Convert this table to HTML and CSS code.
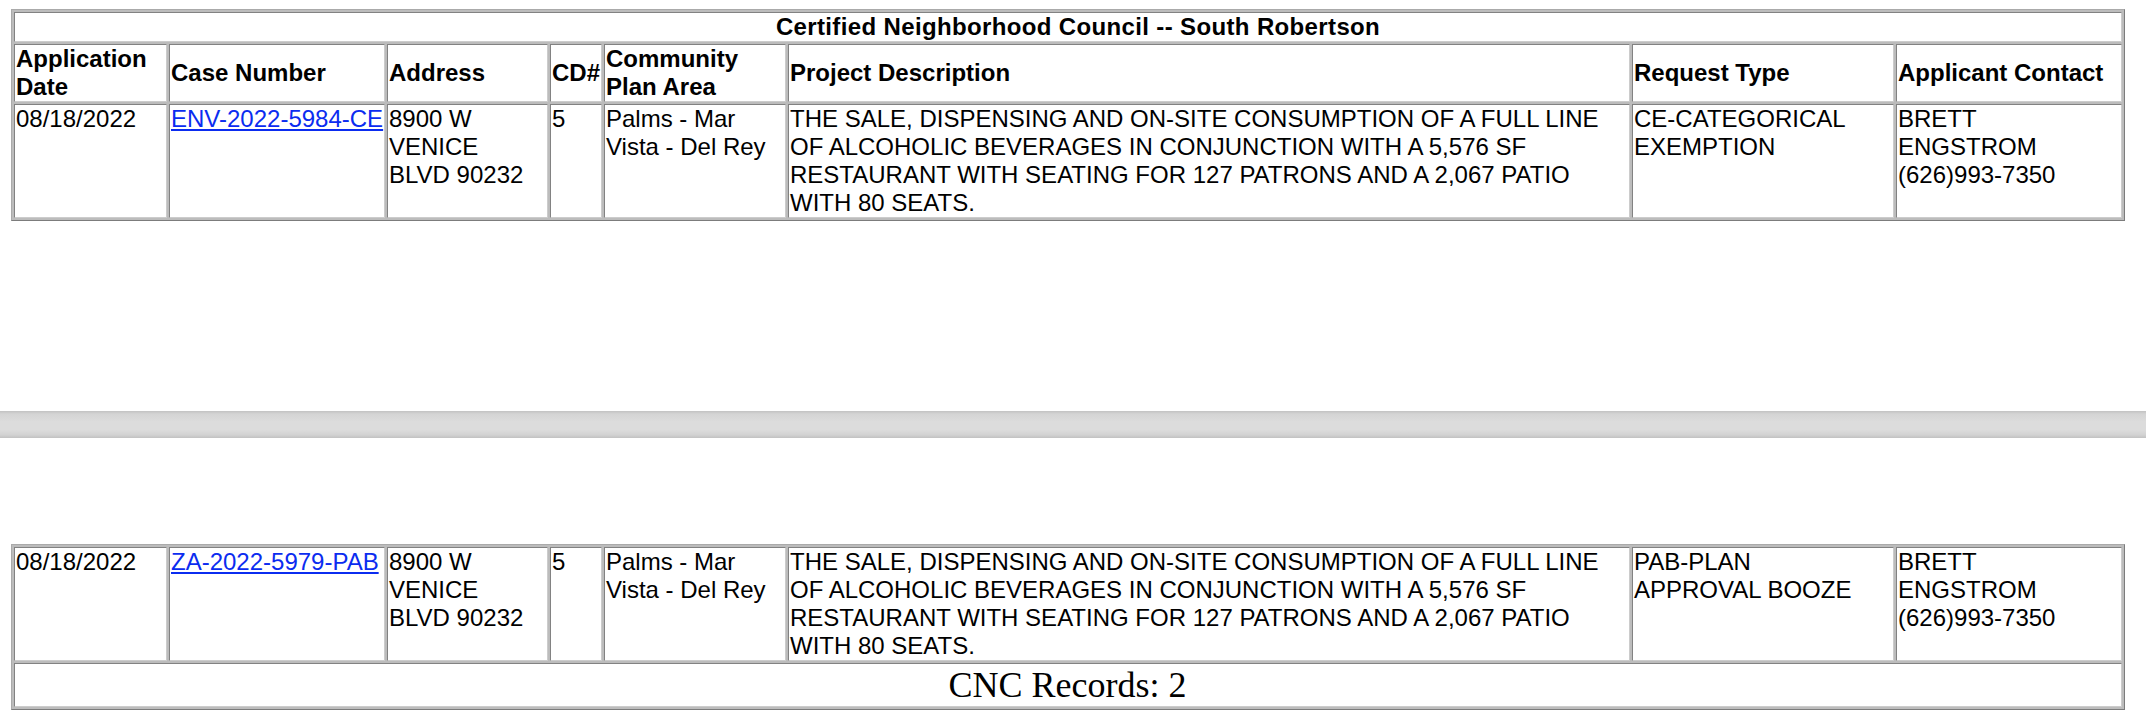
FILE: index.html
```html
<!DOCTYPE html>
<html>
<head>
<meta charset="utf-8">
<title>CNC Records</title>
<link rel="stylesheet" href="styles.css">
</head>
<body>
<div class="page page-first">
  <table class="cnc">
    <colgroup>
      <col class="c-date"><col class="c-case"><col class="c-addr"><col class="c-cd"><col class="c-cpa"><col class="c-desc"><col class="c-req"><col class="c-contact">
    </colgroup>
    <tr><th colspan="8" class="title">Certified Neighborhood Council -- South Robertson</th></tr>
    <tr>
      <th>Application Date</th>
      <th>Case Number</th>
      <th>Address</th>
      <th>CD#</th>
      <th>Community Plan Area</th>
      <th>Project Description</th>
      <th>Request Type</th>
      <th>Applicant Contact</th>
    </tr>
    <tr>
      <td>08/18/2022</td>
      <td class="case"><a href="#">ENV-2022-5984-CE</a></td>
      <td>8900 W VENICE BLVD 90232</td>
      <td>5</td>
      <td>Palms - Mar Vista - Del Rey</td>
      <td>THE SALE, DISPENSING AND ON-SITE CONSUMPTION OF A FULL LINE OF ALCOHOLIC BEVERAGES IN CONJUNCTION WITH A 5,576 SF RESTAURANT WITH SEATING FOR 127 PATRONS AND A 2,067 PATIO WITH 80 SEATS.</td>
      <td>CE-CATEGORICAL EXEMPTION</td>
      <td>BRETT ENGSTROM (626)993-7350</td>
    </tr>
  </table>
</div>
<div class="page-break"></div>
<div class="page page-second">
  <table class="cnc">
    <colgroup>
      <col class="c-date"><col class="c-case"><col class="c-addr"><col class="c-cd"><col class="c-cpa"><col class="c-desc"><col class="c-req"><col class="c-contact">
    </colgroup>
    <tr>
      <td>08/18/2022</td>
      <td class="case"><a href="#">ZA-2022-5979-PAB</a></td>
      <td>8900 W VENICE BLVD 90232</td>
      <td>5</td>
      <td>Palms - Mar Vista - Del Rey</td>
      <td>THE SALE, DISPENSING AND ON-SITE CONSUMPTION OF A FULL LINE OF ALCOHOLIC BEVERAGES IN CONJUNCTION WITH A 5,576 SF RESTAURANT WITH SEATING FOR 127 PATRONS AND A 2,067 PATIO WITH 80 SEATS.</td>
      <td>PAB-PLAN APPROVAL BOOZE</td>
      <td>BRETT ENGSTROM (626)993-7350</td>
    </tr>
    <tr><td colspan="8" class="records">CNC Records: 2</td></tr>
  </table>
</div>
</body>
</html>
```

FILE: styles.css
```css
html, body {
  margin: 0;
  padding: 0;
  background: #ffffff;
}

body {
  font-family: "Liberation Sans", Arial, sans-serif;
  font-size: 24px;
  color: #000000;
}

.page {
  box-sizing: border-box;
  padding-left: 11px;
}

.page-first {
  height: 411px;
  padding-top: 9px;
}

.page-second {
  padding-top: 106px;
}

.page-break {
  height: 27px;
  background: linear-gradient(to bottom, #c2c2c2 0, #d4d4d4 3px, #dcdcdc 40%, #dcdcdc 70%, #d2d2d2 calc(100% - 3px), #c1c1c1 100%);
}

.cnc {
  width: 2114px;
  table-layout: fixed;
  border-collapse: separate;
  border-spacing: 2px;
  border: 1px solid;
  border-color: #aaaaaa #7c7c7c #7c7c7c #aaaaaa;
  background: #bcbcbc;
}

.cnc col { box-sizing: border-box; }
.c-date { width: 153px; }
.c-case { width: 216px; }
.c-addr { width: 161px; }
.c-cd { width: 52px; }
.c-cpa { width: 182px; }
.c-desc { width: 842px; }
.c-req { width: 262px; }
.c-contact { width: 226px; }

.cnc th,
.cnc td {
  box-sizing: border-box;
  border: 1px solid;
  border-color: #828282 #cccccc #cccccc #828282;
  background: #ffffff;
  padding: 0 10px 0 1px;
  line-height: normal;
}

.cnc th {
  font-weight: bold;
  text-align: left;
  vertical-align: middle;
}

.cnc th.title {
  text-align: center;
  padding-left: 30px;
  letter-spacing: 0.36px;
}

.cnc td {
  vertical-align: top;
}

.cnc td.case {
  white-space: nowrap;
}

.cnc a {
  color: #0b2cf0;
  text-decoration: underline;
}

.cnc td.records {
  font-family: "Liberation Serif", "Times New Roman", serif;
  font-size: 36px;
  text-align: center;
  vertical-align: middle;
  padding: 0 2px 0 1px;
}
```
